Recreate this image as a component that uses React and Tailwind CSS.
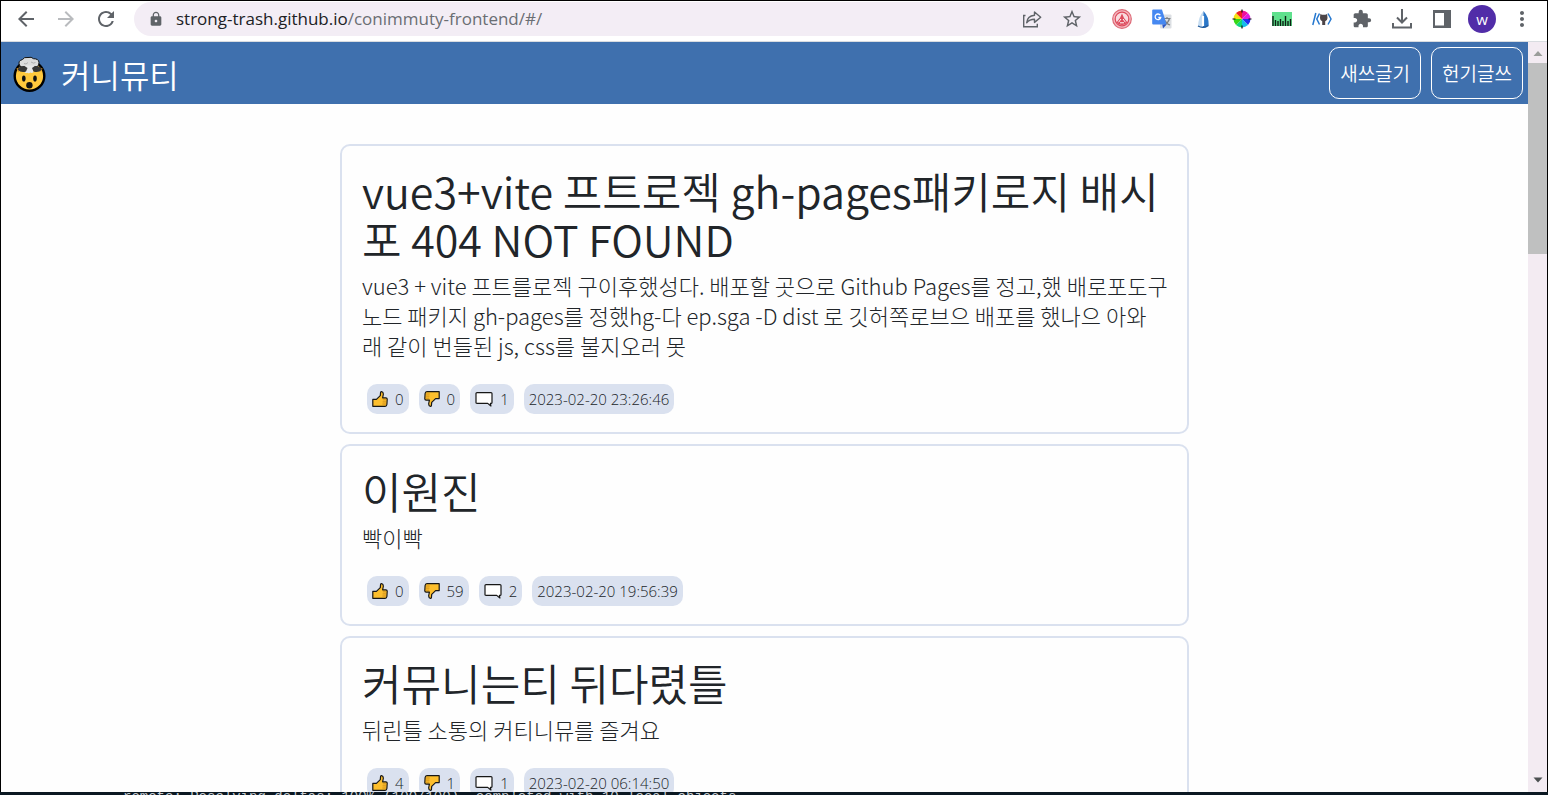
import {
  MdArrowBack,
  MdArrowForward,
  MdExtension,
  MdLock,
  MdMoreVert,
  MdRefresh,
  MdStarBorder,
} from "react-icons/md";

const posts = [
  {
    title: ["vue3+vite 프트로젝 gh-pages패키로지 배시", "포 404 NOT FOUND"],
    body: [
      "vue3 + vite 프트를로젝 구이후했성다. 배포할 곳으로 Github Pages를 정고,했 배로포도구",
      "노드 패키지 gh-pages를 정했hg-다 ep.sga -D dist 로 깃허쪽로브으 배포를 했나으 아와",
      "래 같이 번들된 js, css를 불지오러 못",
    ],
    up: 0,
    down: 0,
    comments: 1,
    date: "2023-02-20 23:26:46",
  },
  {
    title: ["이원진"],
    body: ["빡이빡"],
    up: 0,
    down: 59,
    comments: 2,
    date: "2023-02-20 19:56:39",
  },
  {
    title: ["커뮤니는티 뒤다렸틀"],
    body: ["뒤린틀 소통의 커티니뮤를 즐겨요"],
    up: 4,
    down: 1,
    comments: 1,
    date: "2023-02-20 06:14:50",
  },
];

function ThumbIcon({ down }) {
  return (
    <svg viewBox="0 0 16 16" className={down ? "size-4 rotate-180" : "size-4"} aria-hidden="true">
      <path
        d="M.8 8.400h3.600L8.300 4.600l.3-3.400q.3-.6 1-.5 1.900.3 1.700 2.800l-.7 3.300h3.300q1.200.1 1.300 1.300l-.3 5.400q-.2 1.700-1.800 1.800H.8z"
        fill="#fdbf2d"
        stroke="#171717"
        strokeWidth="1.200"
        strokeLinejoin="round"
      />
      <path d="M10.800 8.800h3.500M10.600 10.900h3.700M10.400 13h3.500" stroke="#c48415" strokeWidth=".8" />
    </svg>
  );
}

function CommentIcon() {
  return (
    <svg viewBox="0 0 18 16" className="h-4 w-[18px]" aria-hidden="true">
      <path
        d="M2 1.600h14q1 0 1 1v8.800q0 1-1 1h-.6l.5 2.600-3.200-2.600H2q-1 0-1-1V2.600q0-1 1-1z"
        fill="#fff"
        stroke="#171717"
        strokeWidth="1.200"
        strokeLinejoin="round"
      />
    </svg>
  );
}

function ExplodingHead() {
  return (
    <svg viewBox="0 0 36 36" className="size-9" aria-hidden="true">
      <circle cx="18.500" cy="20" r="14.800" fill="#ffc83d" stroke="#000" strokeWidth="2.400" />
      <path d="M5.500 12.500Q18 7 31.500 12.500l-1.500 3.500H7z" fill="#e39a1c" />
      <path d="M8 14.500h21.500v3H7.500z" fill="#ffc83d" />
      <path
        d="M8.500 9q-2-4 3-5.500Q13 .8 17 1.500q3.500-1 5.500 1.200 5 0 5.500 3.500.5 4-3 5l-12.500.3Q9 11.500 8.500 9z"
        fill="#dcdcdc"
        stroke="#111"
        strokeWidth="1"
      />
      <path d="M14 9.500h9l-.5 6.500q-1.500 1.500-3 .5-1.500 1.500-3 .200-2 .8-3-.700z" fill="#e6e6e6" />
      <path d="M6.500 13.500Q8.500 9.500 13.500 10l3 2-1.500 3.500q-5 1.800-8.500-2zM31 13.500q-2-4-7-3.500l-3 2 1.500 3.500q5 1.800 8.500-2z" fill="#363636" />
      <path d="M13 7.500q2 1.500 4-1M20 6q2.500 2 4.500.5" stroke="#aaa" strokeWidth=".9" fill="none" />
      <ellipse cx="12.800" cy="22.500" rx="1.800" ry="3.100" fill="#111" />
      <ellipse cx="24" cy="22.500" rx="1.800" ry="3.100" fill="#111" />
      <circle cx="18.400" cy="29.300" r="3.200" fill="#111" />
    </svg>
  );
}

function ShareIcon() {
  return (
    <svg viewBox="0 0 20 20" className="size-5" fill="none" stroke="#5f6368" strokeWidth="1.400" aria-hidden="true">
      <path d="M3.500 6.500H1.700v11.300h13.600v-3" />
      <path d="M12.500 3l6.200 5.200-6.200 5.200v-3.200q-5 0-7.800 3.500.5-6.700 7.800-7.500z" strokeLinejoin="round" />
    </svg>
  );
}

function BadgeExtension() {
  return (
    <svg viewBox="0 0 20 20" className="size-5" fill="none" aria-hidden="true">
      <circle cx="10" cy="10" r="9.300" fill="#f4b9c0" stroke="#dd6a77" strokeWidth="1.200" />
      <circle cx="10" cy="10" r="6.800" fill="#f9dbdf" stroke="#dd4a5c" strokeWidth="1.200" />
      <path d="M10 4.500l2 4.500 3.500 4.500q-2.500 2.500-5.500 2.500t-5.500-2.500L8 9z" fill="#dd4a5c" />
      <path d="M6.500 13.300L9 10M13.500 13.300L11 10M8 13.800h4" stroke="#fff" strokeWidth="1" />
    </svg>
  );
}

function TranslateExtension() {
  return (
    <svg viewBox="0 0 20 20" className="size-5" aria-hidden="true">
      <rect x="8" y="5.500" width="11.500" height="14" rx="1" fill="#dcdfe3" />
      <path d="M11.500 9.500h7M15 8v1.500M17.500 9.500q-1 4-5 6.500M13 11.500q1.500 3.500 5 4.500" stroke="#7c8084" strokeWidth="1.200" fill="none" />
      <path d="M1.200.5H10l4.600 15H1.200q-1 0-1-1v-13q0-1 1-1z" fill="#4688f1" />
      <path d="M10.300 15.500h4.300L11 19.500z" fill="#2a56c6" />
      <path d="M8.300 6.200A2.800 2.800 0 1 0 8.700 8.500H6.300" fill="none" stroke="#fff" strokeWidth="1.300" />
    </svg>
  );
}

function SailExtension() {
  return (
    <svg viewBox="0 0 20 20" className="size-5" aria-hidden="true">
      <path d="M11.500 2Q6.200 8 6 17.500l6 1.500z" fill="#c5dcf1" />
      <path d="M11.500 2q5.500 6 5.200 14-2 3.200-5.700 3z" fill="#2b77c8" />
      <path d="M11 7v10" stroke="#fff" strokeWidth="2.200" />
      <path d="M6 17q5 3 10.500-.5" stroke="#225a9b" strokeWidth="1.400" fill="none" />
    </svg>
  );
}

function ColorWheelExtension() {
  return (
    <svg viewBox="0 0 20 20" className="size-5" aria-hidden="true">
      <path d="M10 10V1.500A8.500 8.500 0 0 1 16 4z" fill="#f0109a" />
      <path d="M10 10l6-6a8.500 8.500 0 0 1 2.500 6z" fill="#e01be0" />
      <path d="M10 10h8.500a8.500 8.500 0 0 1-2.500 6z" fill="#2430ee" />
      <path d="M10 10l6 6a8.500 8.500 0 0 1-6 2.500z" fill="#16bdeb" />
      <path d="M10 10v8.500A8.500 8.500 0 0 1 4 16z" fill="#12d67c" />
      <path d="M10 10l-6 6a8.500 8.500 0 0 1-2.500-6z" fill="#35d816" />
      <path d="M10 10H1.500A8.500 8.500 0 0 1 4 4z" fill="#f5e312" />
      <path d="M10 10L4 4a8.500 8.500 0 0 1 6-2.500z" fill="#f02020" />
      <path d="M10 .5v3M10 16.500v3M.5 10h3M16.500 10h3" stroke="#111" strokeWidth="1.200" />
    </svg>
  );
}

function RulerExtension() {
  return (
    <svg viewBox="0 0 20 16" className="h-4 w-5" aria-hidden="true">
      <path d="M0 1h20v14H0z" fill="#5fe08d" />
      <path
        d="M1 5v10M3.500 9v6M6 10v5M8.500 8v7M11 10v5M13.500 5v10M16 10v5M18.500 8v7"
        stroke="#0c1f13"
        strokeWidth="1.400"
      />
    </svg>
  );
}

function CodeExtension() {
  return (
    <svg viewBox="0 0 20 16" className="h-4 w-5" fill="none" aria-hidden="true">
      <path d="M3.800 2L.8 14M7.500 2.500L4.800 8l2.700 5.500M16 2.500L19 8l-3 5.500" stroke="#2477cf" strokeWidth="1.500" />
      <path d="M8.300 3l1.700.8h3.400l1.700-.8.400 4q0 2.700-2.300 3.200V14h-3v-3.800Q8 9.700 8 7z" fill="#4c4548" />
    </svg>
  );
}

function DownloadIcon() {
  return (
    <svg viewBox="0 0 20 20" className="size-5" fill="none" stroke="#5f6368" strokeWidth="2" aria-hidden="true">
      <path d="M10 0v13M5 8.500l5 5 5-5M1 14v4.500h18V14" />
    </svg>
  );
}

function SidePanelIcon() {
  return (
    <svg viewBox="0 0 20 20" className="size-5" aria-hidden="true">
      <path d="M1 1h18v18H1z" fill="#5f6368" />
      <path d="M3 4h9v12.500H3z" fill="#fff" />
    </svg>
  );
}

const extensions = [
  { name: "Badge", icon: <BadgeExtension /> },
  { name: "Translate", icon: <TranslateExtension /> },
  { name: "Sail", icon: <SailExtension /> },
  { name: "Color wheel", icon: <ColorWheelExtension /> },
  { name: "Ruler", icon: <RulerExtension /> },
  { name: "Code", icon: <CodeExtension /> },
  { name: "Extensions", icon: <MdExtension className="size-5" /> },
  { name: "Downloads", icon: <DownloadIcon /> },
  { name: "Side panel", icon: <SidePanelIcon /> },
];

function IconButton({ label, children }) {
  return (
    <button type="button" aria-label={label} className="flex size-10 shrink-0 items-center justify-center">
      {children}
    </button>
  );
}

function BrowserBar() {
  return (
    <div className="flex h-[41px] shrink-0 items-center border-b border-[#d9dce0] bg-white pr-[5px] pb-1 pl-[5px] text-[#5f6368]">
      <IconButton label="Back">
        <MdArrowBack className="size-6" />
      </IconButton>
      <span className="flex text-[#b9bbbe]">
        <IconButton label="Forward">
          <MdArrowForward className="size-6" />
        </IconButton>
      </span>
      <IconButton label="Reload">
        <MdRefresh className="size-6" />
      </IconButton>
      <div className="ml-2 flex h-[34px] min-w-0 flex-1 items-center rounded-full bg-[#f3edf5] pr-0.5 pl-3.5">
        <MdLock className="size-4 shrink-0" />
        <a href="#/" className="ml-3 min-w-0 flex-1 truncate font-['Open_Sans',sans-serif] text-[17px] text-[#6a6e73]">
          <span className="text-[#202124]">strong-trash.github.io</span>/conimmuty-frontend/#/
        </a>
        <IconButton label="Share">
          <ShareIcon />
        </IconButton>
        <IconButton label="Bookmark">
          <MdStarBorder className="size-[22px]" />
        </IconButton>
      </div>
      <div className="ml-2 flex">
        {extensions.map((item) => (
          <IconButton key={item.name} label={item.name}>
            {item.icon}
          </IconButton>
        ))}
        <IconButton label="Profile">
          <span className="flex size-7 items-center justify-center rounded-full bg-[#512da8] font-['Open_Sans',sans-serif] text-[15px] text-white">
            w
          </span>
        </IconButton>
        <IconButton label="Menu">
          <MdMoreVert className="size-6" />
        </IconButton>
      </div>
    </div>
  );
}

function Lines({ lines }) {
  return lines.map((line) => (
    <span key={line} className="block">
      {line}
    </span>
  ));
}

function Chip({ icon, children }) {
  return (
    <span className="flex h-[30px] items-center gap-[7px] rounded-[10px] bg-[#dae1ef] px-[5px] font-['Open_Sans',sans-serif] text-[15px]">
      {icon}
      {children}
    </span>
  );
}

function Post({ post }) {
  return (
    <article className="rounded-[10px] border-2 border-[#dae1ef] pt-5 pr-3 pb-[18px] pl-5">
      <h2 className="text-[43px] leading-[48px] font-[350]">
        <Lines lines={post.title} />
      </h2>
      <p className="mt-2 text-[22px] leading-[30px]">
        <Lines lines={post.body} />
      </p>
      <div className="mt-6 ml-[5px] flex gap-2.5">
        <Chip icon={<ThumbIcon />}>{post.up}</Chip>
        <Chip icon={<ThumbIcon down />}>{post.down}</Chip>
        <Chip icon={<CommentIcon />}>{post.comments}</Chip>
        <Chip>{post.date}</Chip>
      </div>
    </article>
  );
}

function Site() {
  return (
    <div className="min-w-0 flex-1 overflow-hidden font-['Noto_Sans_CJK_KR',sans-serif] font-light text-[#212529]">
      <header className="flex h-[62px] items-center justify-between bg-[#3f70ae] pr-[5px] pl-2.5 font-[350] text-white">
        <a href="#/" className="flex items-center gap-3.5 pt-0.5">
          <ExplodingHead />
          <h1 className="text-[32px] leading-9">커니뮤티</h1>
        </a>
        <nav className="flex gap-2.5">
          {["새쓰글기", "헌기글쓰"].map((label) => (
            <button key={label} type="button" className="h-[52px] rounded-[10px] border border-white px-2.5 text-[19px]">
              {label}
            </button>
          ))}
        </nav>
      </header>
      <main className="mx-auto mt-10 flex max-w-[849px] flex-col gap-2.5">
        {posts.map((post) => (
          <Post key={post.date} post={post} />
        ))}
      </main>
    </div>
  );
}

function ScrollBar() {
  return (
    <div className="flex w-[19px] shrink-0 flex-col items-center bg-[#f3ebf2]" aria-hidden="true">
      <svg viewBox="0 0 18 21" className="h-[21px] w-[18px]">
        <path d="M4.500 14L9 9l4.500 5z" fill="#9a9d9a" />
      </svg>
      <div className="h-[191px] w-full bg-[#bfc0c0]" />
      <svg viewBox="0 0 18 24" className="mt-auto h-6 w-[18px]">
        <path d="M4.500 9.500L9 14.500l4.500-5z" fill="#4b4f50" />
      </svg>
    </div>
  );
}

export default function App() {
  return (
    <div className="flex h-screen flex-col overflow-hidden bg-[#0b1822]">
      <div className="flex min-h-0 flex-1 flex-col border-x border-t border-black bg-[#fefefe]">
        <BrowserBar />
        <div className="flex min-h-0 flex-1">
          <Site />
          <ScrollBar />
        </div>
      </div>
      <footer className="h-[3px] shrink-0 overflow-hidden pl-[123px] font-['Liberation_Mono',monospace] text-[14px] leading-[10px] whitespace-nowrap text-[#c5cbd0]">
        remote: Resolving deltas: 100% (100/100), completed with 10 local objects.
      </footer>
    </div>
  );
}
